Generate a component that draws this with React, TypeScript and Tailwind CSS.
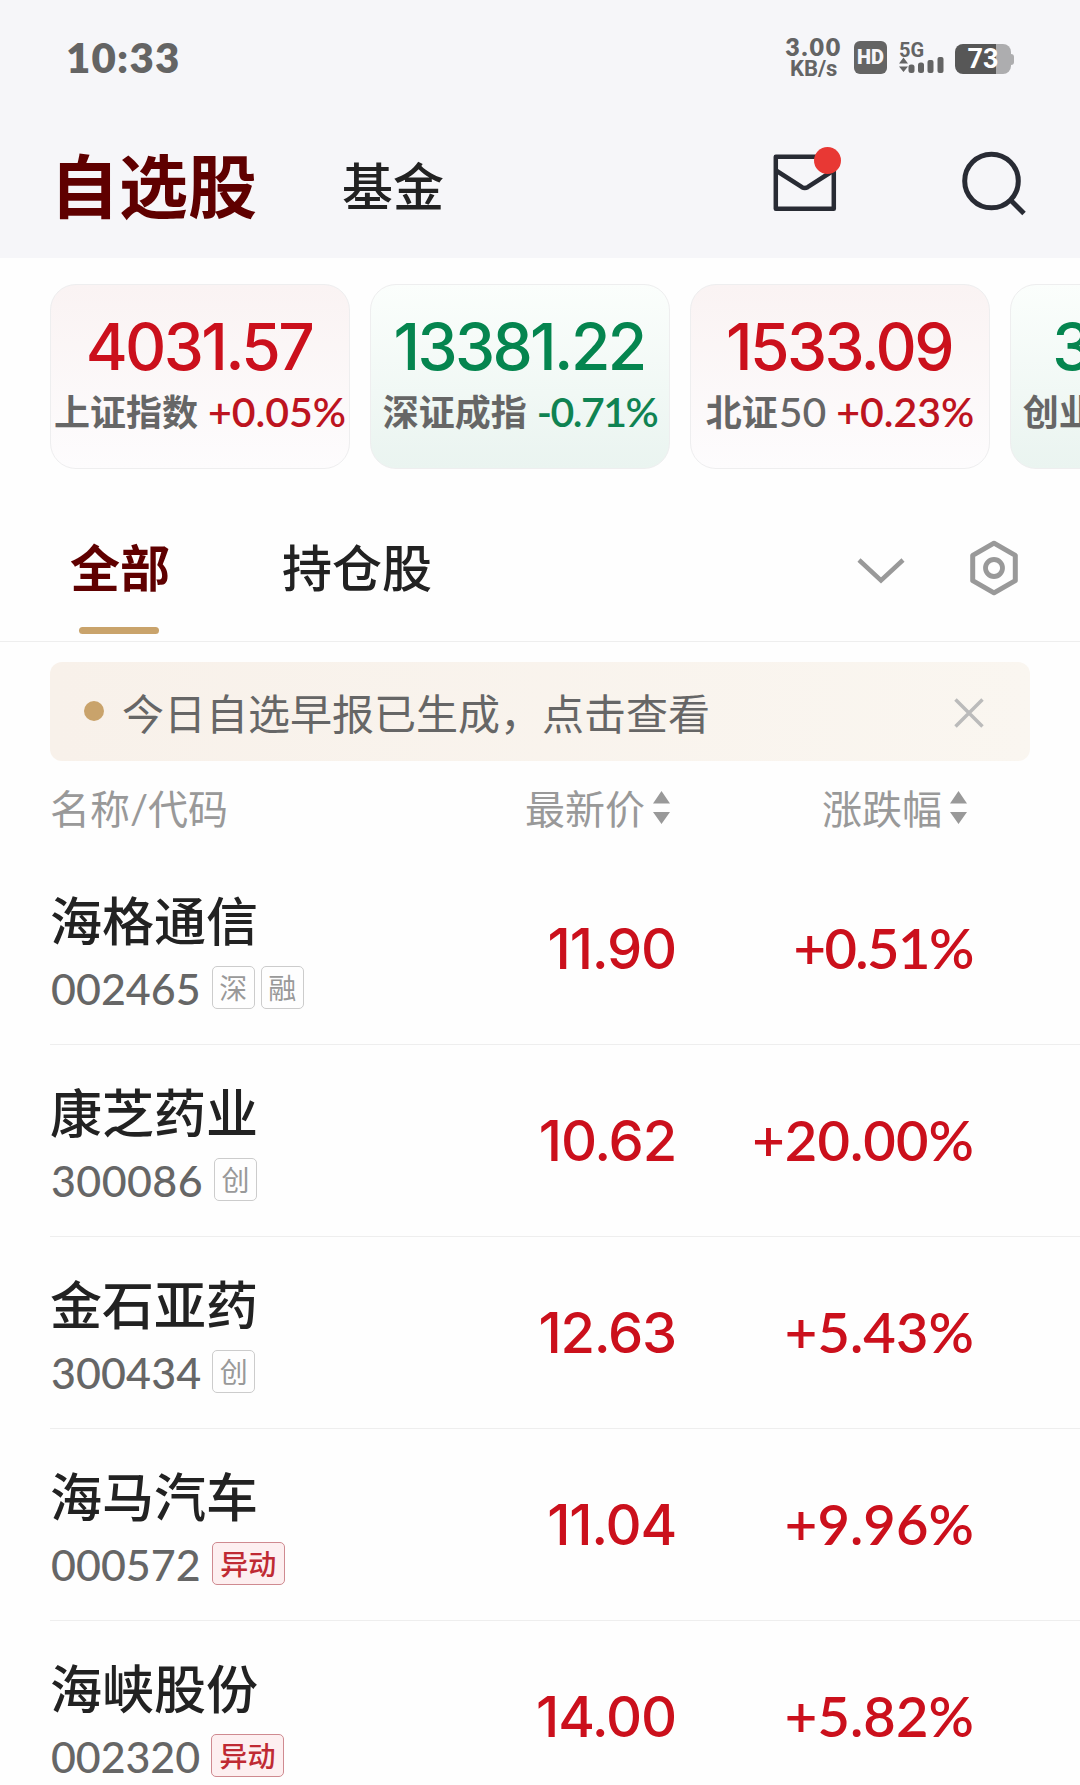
import clsx from 'clsx';

type Trend = 'up' | 'down';

interface MarketIndex {
  name: string;
  suffix?: string;
  value: string;
  change: string;
  changeClass?: string;
  trend: Trend;
}

interface Stock {
  name: string;
  code: string;
  codeClass?: string;
  tags: string[];
  hot?: boolean;
  price: string;
  change: string;
  changeClass: string;
}

const indices: MarketIndex[] = [
  { name: '上证指数', value: '4031.57', change: '+0.05%', trend: 'up' },
  { name: '深证成指', value: '13381.22', change: '-0.71%', changeClass: 'tracking-[-1.5px]', trend: 'down' },
  { name: '北证', suffix: '50', value: '1533.09', change: '+0.23%', trend: 'up' },
  { name: '创业板指', value: '3122.41', change: '-1.12%', changeClass: 'tracking-[-1.5px]', trend: 'down' },
];

const stocks: Stock[] = [
  { name: '海格通信', code: '002465', tags: ['深', '融'], price: '11.90', change: '+0.51%', changeClass: 'tracking-[-1.5px] mr-[1px]' },
  { name: '康芝药业', code: '300086', codeClass: 'tracking-[0.4px]', tags: ['创'], price: '10.62', change: '+20.00%', changeClass: 'tracking-[0.1px]' },
  { name: '金石亚药', code: '300434', codeClass: 'tracking-[0.1px]', tags: ['创'], price: '12.63', change: '+5.43%', changeClass: 'tracking-[0.1px]' },
  { name: '海马汽车', code: '000572', tags: ['异动'], hot: true, price: '11.04', change: '+9.96%', changeClass: 'tracking-[0.1px]' },
  { name: '海峡股份', code: '002320', codeClass: 'tracking-[-0.1px]', tags: ['异动'], hot: true, price: '14.00', change: '+5.82%', changeClass: 'tracking-[0.1px]' },
];

function StatusBar() {
  return (
    <div className="flex h-[114px] items-center pl-[66px] pr-[66px] text-[#646464]">
      <span className="text-[42px] leading-[44px] font-extrabold tracking-[1.2px]">10:33</span>
      <div className="ml-auto flex flex-col items-center pt-[2px]">
        <span className="text-[25px] leading-[21px] font-extrabold tracking-[1.8px]">3.00</span>
        <span className="font-[Roboto] text-[22px] leading-[23px] font-bold">KB/s</span>
      </div>
      <div className="ml-[12px] flex h-[33px] w-[33px] items-center justify-center rounded-[6px] bg-[#646464] font-[Roboto] text-[20px] leading-none font-black text-[#f6f6f9]">
        HD
      </div>
      <div className="ml-[12px] flex flex-col pt-[1px]">
        <span className="font-[Roboto] text-[20px] leading-[16px] font-bold">5G</span>
        <svg width="45" height="17" viewBox="0 0 45 17" className="-mt-[1px]" fill="currentColor">
          <path d="M4.500 0.500 9 6.500H0zM4.500 15 0 9.500h9z" />
          <rect x="9.500" y="7.500" width="6" height="8.500" rx="2.500" />
          <rect x="19" y="5.500" width="6" height="10.500" rx="2.500" />
          <rect x="28.500" y="3" width="6" height="13" rx="2" />
          <rect x="38.500" y="0" width="6" height="16" rx="2" />
        </svg>
      </div>
      <div className="ml-[11px] flex items-center pt-[4px]">
        <div className="flex h-[30px] w-[56px] items-center justify-center rounded-[8px] bg-[linear-gradient(90deg,#575757_73%,#adadaf_73%)] pt-[1px] font-[Roboto] text-[27px] leading-none font-bold text-white">
          73
        </div>
        <div className="h-[11px] w-[3px] rounded-r-[3px] bg-[#adadaf]" />
      </div>
    </div>
  );
}

function Header() {
  return (
    <div className="flex h-[144px] items-center pr-[53px] pl-[50px]">
      <h1 className="pt-[1px] text-[69px] leading-[80px] font-bold text-[#5f0000]">自选股</h1>
      <span className="ml-[85px] pt-[1px] text-[51px] leading-[60px] font-medium text-[#222]">基金</span>
      <div className="relative ml-auto">
        <svg width="64" height="58" viewBox="0 0 64 58" fill="none" stroke="#282b34" strokeWidth="4.500" strokeLinejoin="round" className="-mt-[6px]">
          <rect x="2.800" y="2.800" width="58" height="52" />
          <path d="M3 16.500 29 33.200q2.800 1.600 5.600 0L60.500 16.500" />
        </svg>
        <div className="absolute -top-[13px] right-[-4px] h-[27px] w-[27px] rounded-full bg-[#e83834]" />
      </div>
      <svg width="66" height="66" viewBox="0 0 66 66" fill="none" stroke="#282b34" strokeWidth="5" className="ml-[124px] -mt-[4px]">
        <circle cx="30.500" cy="30" r="26.800" />
        <path d="m49.500 49 13.500 13.500" />
      </svg>
    </div>
  );
}

function IndexCard({ item }: { item: MarketIndex }) {
  const up = item.trend === 'up';
  return (
    <div
      className={clsx(
        'flex h-[185px] w-[300px] shrink-0 flex-col items-center rounded-[26px] border border-[#eeeeef] pt-[30px] whitespace-nowrap',
        up ? 'bg-linear-to-b from-[#faf3f3] to-[#fdfcfd]' : 'bg-linear-to-b from-[#fbfefc] to-[#eaf4f0]',
      )}
    >
      <div className={clsx('mr-[2px] font-[Inter] text-[64px] leading-[64px] font-medium tracking-[-2.600px]', up ? 'text-[#cb101c]' : 'text-[#05854f]')}>
        {item.value}
      </div>
      <div className="mt-[11px] flex text-[41px] leading-[44px] font-semibold">
        <span className="text-[36px] font-bold text-[#666]">{item.name}</span>
        {item.suffix && <span className="ml-[1px] font-medium text-[#666]">{item.suffix}</span>}
        <span className={clsx('ml-[10px]', up ? 'text-[#bd1420]' : 'text-[#0f8352]', item.changeClass)}>{item.change}</span>
      </div>
    </div>
  );
}

function GroupTabs() {
  return (
    <div className="mt-[27px] flex h-[146px] items-center border-b border-[#eee] pr-[61px] pl-[70px] text-[50px] leading-[60px]">
      <div className="relative flex h-full items-center pb-[2px] font-bold text-[#5f0000]">
        全部
        <div className="absolute bottom-[7px] left-[9px] h-[7px] w-[80px] rounded-full bg-[#c9a36b]" />
      </div>
      <div className="ml-[112px] pb-[2px] font-medium text-[#222]">持仓股</div>
      <svg width="48" height="26" viewBox="0 0 48 26" fill="none" stroke="#999" strokeWidth="4.500" className="mt-[4px] ml-auto">
        <path d="M2 2l22 20.500L46 2" />
      </svg>
      <svg width="50" height="56" viewBox="0 0 50 56" fill="none" stroke="#999" className="-mt-px ml-[64px]">
        <path d="M25 3.200 46.300 15.300v25.400L25 52.800 3.700 40.700V15.300z" strokeWidth="5" strokeLinejoin="round" />
        <circle cx="25" cy="28" r="8.500" strokeWidth="4.800" />
      </svg>
    </div>
  );
}

function Notice() {
  return (
    <div className="mx-[50px] mt-[20px] flex h-[99px] items-center rounded-[12px] bg-linear-to-r from-[#f8f1ea] to-[#faf6f0] pr-[46px] pl-[34px]">
      <div className="-mt-[1px] h-[20px] w-[20px] rounded-full bg-[#c9a36b]" />
      <span className="ml-[18px] pt-[4px] text-[42px] leading-[50px] text-[#666]">今日自选早报已生成，点击查看</span>
      <svg width="30" height="30" viewBox="0 0 30 30" stroke="#bbb" strokeWidth="3.500" className="mt-[3px] ml-auto">
        <path d="M1.500 1.500l27 27M28.500 1.500l-27 27" />
      </svg>
    </div>
  );
}

function SortArrows() {
  return (
    <svg width="17" height="34" viewBox="0 0 17 34" fill="#999" className="-mt-[2px] ml-[8px]">
      <path d="M8.500 0 17 12.500H0zM8.500 33 0 21h17z" />
    </svg>
  );
}

function Tag({ label, hot }: { label: string; hot?: boolean }) {
  return (
    <span
      className={clsx(
        'mr-[6px] flex h-[43px] items-center rounded-[5px] border-[1.500px] pt-[2px] text-[28px] leading-[34px]',
        hot ? 'border-[#cf8a90] bg-[#fdeff0] px-[7.500px] font-medium text-[#bf2a33]' : 'border-[#ccc] px-[6.500px] text-[#999]',
      )}
    >
      {label}
    </span>
  );
}

function StockRow({ stock }: { stock: Stock }) {
  return (
    <div className="ml-[50px] flex h-[192px] border-b border-[#eee]">
      <div className="w-[340px] pt-[36px]">
        <div className="text-[52px] leading-[64px] font-medium text-[#222]">{stock.name}</div>
        <div className="mt-[12px] flex items-center">
          <span className={clsx('mr-[11px] ml-[1px] pt-[3px] text-[43px] leading-[41px] font-medium text-[#666]', stock.codeClass)}>{stock.code}</span>
          {stock.tags.map((t) => (
            <Tag key={t} label={t} hot={stock.hot} />
          ))}
        </div>
      </div>
      <div className="flex w-[286px] items-center justify-end font-[Inter] text-[56px] font-medium tracking-[-1.200px] text-[#cb101c]">
        {stock.price}
      </div>
      <div className="flex w-[298px] items-center justify-end pb-[2px] text-[56px] font-semibold text-[#cb101c]">
        <span className={stock.changeClass}>{stock.change}</span>
      </div>
    </div>
  );
}

export default function App() {
  return (
    <div className="h-[1785px] w-[1080px] overflow-hidden bg-[#fefefe] font-['Lato','Noto_Sans_CJK_SC',sans-serif]">
      <div className="bg-[#f6f6f9]">
        <StatusBar />
        <Header />
      </div>
      <div className="flex gap-[20px] overflow-hidden pt-[26px] pl-[50px]">
        {indices.map((item) => (
          <IndexCard key={item.name} item={item} />
        ))}
      </div>
      <GroupTabs />
      <Notice />
      <div className="flex h-[92px] items-center pt-[3px] pl-[50px] text-[40px] leading-[44px] text-[#999]">
        <div className="w-[340px]">名称/代码</div>
        <div className="flex w-[280px] items-center justify-end">
          最新价
          <SortArrows />
        </div>
        <div className="flex w-[297px] items-center justify-end">
          涨跌幅
          <SortArrows />
        </div>
      </div>
      {stocks.map((s) => (
        <StockRow key={s.code} stock={s} />
      ))}
    </div>
  );
}
